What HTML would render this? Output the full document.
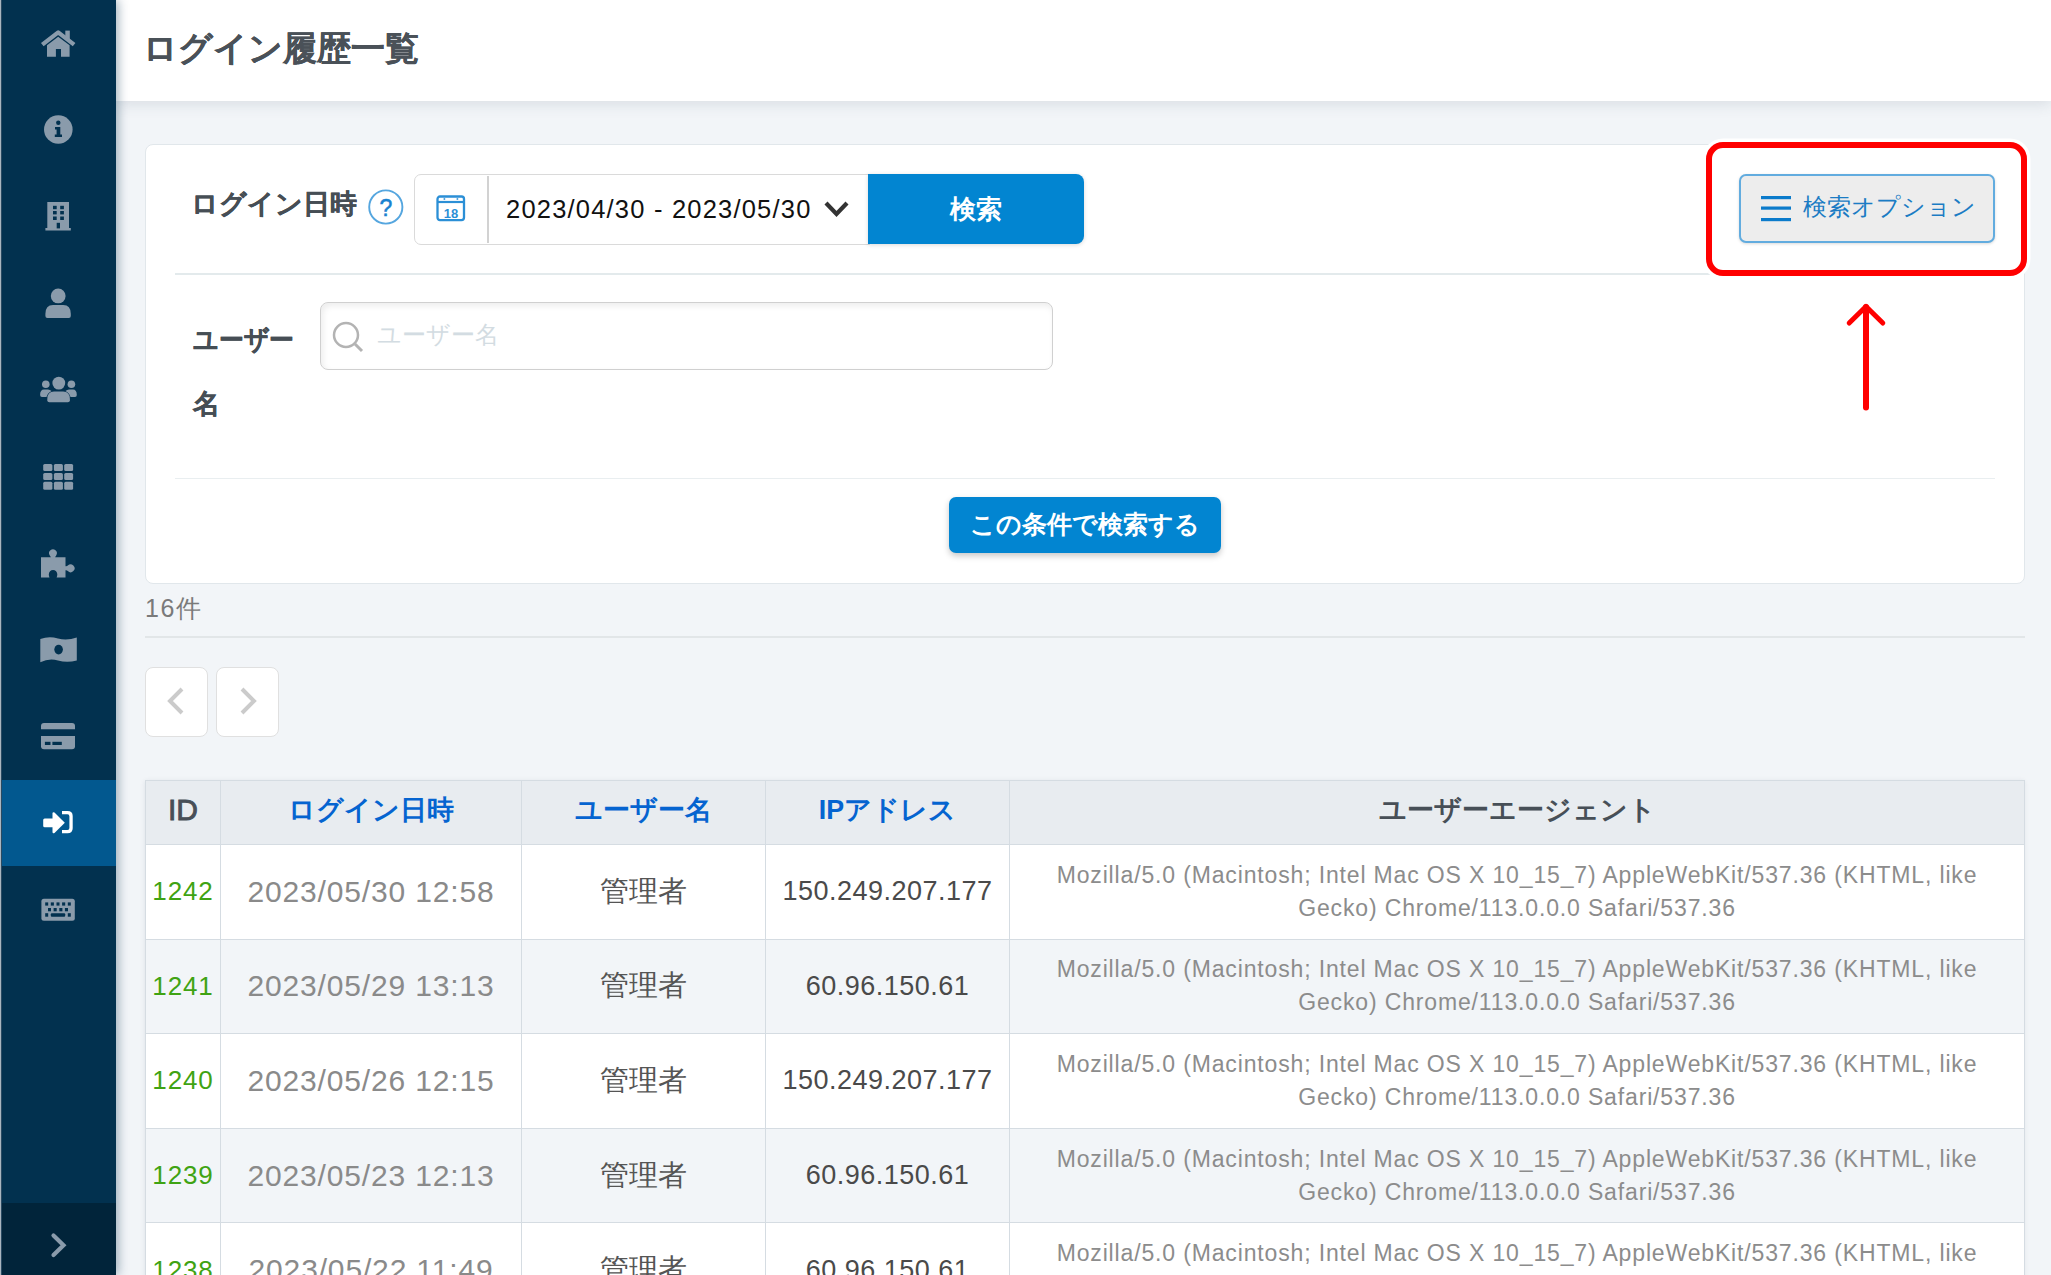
<!DOCTYPE html>
<html><head><meta charset="utf-8">
<style>
*{box-sizing:border-box;margin:0;padding:0}
html,body{width:2051px;height:1275px;overflow:hidden}
body{background:#F2F5F8;font-family:"Liberation Sans",sans-serif;position:relative;color:#333}
.abs{position:absolute}
#side{left:0;top:0;width:116px;height:1275px;background:#02314F;z-index:5;box-shadow:2px 0 10px rgba(0,45,80,.38)}
#side .edge{position:absolute;left:0;top:0;width:1px;height:1275px;background:#A9B5BF;z-index:2}#side .edge2{position:absolute;left:1px;top:0;width:1px;height:1275px;background:#2A4A62;z-index:2}#side .act{position:absolute;left:0;top:780px;width:116px;height:86px;background:#02588F}
#side .bot{position:absolute;left:0;top:1203px;width:116px;height:72px;background:#01243A}
#side svg{position:absolute;fill:#8A9BAB}
#hdr{left:116px;top:0;width:1935px;height:101px;background:#fff;z-index:3;box-shadow:0 3px 14px rgba(60,80,100,.14)}
#title{left:143px;top:24px;font-size:33.5px;font-weight:bold;color:#4A5158;letter-spacing:0px;-webkit-text-stroke:0.3px #4A5158;z-index:4;white-space:nowrap;line-height:50px}
#card{left:145px;top:144px;width:1880px;height:440px;background:#fff;border:1.5px solid #E1E7EB;border-radius:8px}
.lbl{font-weight:bold;color:#464E55;white-space:nowrap;font-size:27.3px;line-height:40px;-webkit-text-stroke:0.3px #464E55}
.hr{height:1.5px;background:#E3EAEC}
#datebox{left:414px;top:174px;width:456px;height:71px;border:1.6px solid #DADADA;border-radius:7px 0 0 7px;background:#fff}
#datesep{left:487px;top:176px;width:1.5px;height:67px;background:#D2D2D2}
#datetxt{left:506px;top:191px;font-size:25.5px;color:#111;white-space:nowrap;line-height:36px;letter-spacing:1.2px}
#btn1{left:868px;top:174px;width:216px;height:70px;background:#0285D1;border-radius:0 8px 8px 0;color:#fff;font-weight:bold;font-size:26px;text-align:center;line-height:70px;box-shadow:0 1px 4px rgba(0,0,0,.15)}
#red{left:1706px;top:142px;width:321px;height:134px;border:6.5px solid #FF0000;border-radius:17px;box-shadow:0 0 0 3.5px #fff;z-index:2}
#optbtn{left:1739px;top:174px;width:256px;height:69px;background:#EDEDED;border:2px solid #62ACDF;border-radius:7px;box-shadow:0 1px 3px rgba(0,0,0,.15);z-index:3}
#opttxt{left:1803px;top:188px;font-size:23.5px;color:#1B7CC4;white-space:nowrap;line-height:38px;z-index:4}
#uinput{left:320px;top:302px;width:733px;height:68px;border:1.6px solid #D0D0D0;border-radius:8px;background:#fff;box-shadow:inset 2px 3px 6px rgba(0,0,0,.075)}
#uph{left:377px;top:316px;font-size:24.2px;color:#D3DCE2;white-space:nowrap;line-height:38px}
#btn2{left:949px;top:497px;width:272px;height:56px;background:#0285D1;border-radius:7px;color:#fff;font-weight:bold;font-size:24.6px;text-align:center;line-height:56px;box-shadow:0 3px 6px rgba(0,0,0,.22)}
#cnt{left:145px;top:590px;font-size:25px;color:#7A7A7A;line-height:36px;white-space:nowrap}
#cnthr{left:145px;top:636px;width:1880px;height:2px;background:#E2E6E8}
.pg{width:62px;height:70px;background:#fff;border:1.5px solid #E0E0E0;border-radius:8px}
#tbl{left:145px;top:780px;width:1879px;height:520px;box-shadow:0 1px 5px rgba(40,60,80,.10)}
table{border-collapse:collapse;width:1879px;table-layout:fixed}
th,td{border:1.5px solid #D5DCE2;text-align:center;vertical-align:middle;white-space:nowrap}
th{background:#E8ECF0;height:64px;font-size:26.8px;font-weight:bold;color:#0564D0;padding-bottom:5px}
th.id{color:#474F57}
td{height:94.6px;background:#fff}
tr.odd td{background:#F2F5F8}
td.id{color:#3FA313;font-size:26px;letter-spacing:0.9px}
td.dt{color:#8A8A8A;font-size:30px;letter-spacing:0.85px}
td.un{color:#555;font-size:29px}
td.ip{color:#4A4A4A;font-size:27px;letter-spacing:0.5px}
td.ua{color:#8C8C8C;font-size:23px;white-space:normal;line-height:33px;letter-spacing:0.85px;padding:0 20px}
</style></head><body>
<div id="side" class="abs">
  <div class="edge"></div><div class="edge2"></div><div class="act"></div>
  <div class="bot"></div>
<svg style="position:absolute;left:0;top:0" width="116" height="1275" viewBox="0 0 116 1275">
<g fill="#8A9BAB">
<!-- home -->
<polyline points="42.3,44.6 58.2,32.4 74.1,44.6" fill="none" stroke="#8A9BAB" stroke-width="4.3" stroke-linecap="butt" stroke-linejoin="round"/>
<rect x="65.3" y="30.6" width="4.5" height="9"/>
<path d="M47,45.3 L58.2,36.8 L69.6,45.3 L69.6,56.7 L61,56.7 L61,49 L55.9,49 L55.9,56.7 L47,56.7 Z"/>
<!-- info -->
<circle cx="58.3" cy="129.5" r="14.3"/>
<!-- building -->
<rect x="47.3" y="202" width="21.7" height="27"/>
<rect x="45.4" y="228" width="25.4" height="2.5"/>
<!-- user -->
<circle cx="58.2" cy="295.9" r="7.4"/>
<path d="M45.4,314 Q45.4,305 53,305 L63.2,305 Q70.8,305 70.8,314 L70.8,316 Q70.8,318 68.8,318 L47.4,318 Q45.4,318 45.4,316 Z"/>
<!-- users -->
<circle cx="58.8" cy="383.1" r="6.4"/>
<circle cx="45.8" cy="384.2" r="3.8"/>
<circle cx="71.4" cy="384.2" r="3.8"/>
<path d="M47.3,399 Q47.3,391.4 54,391.4 L63.2,391.4 Q69.9,391.4 69.9,399 L69.9,400.3 Q69.9,402.3 67.9,402.3 L49.3,402.3 Q47.3,402.3 47.3,400.3 Z"/>
<path d="M40.1,395 Q40.1,389.5 44,389.5 L48,389.5 Q50,389.5 51.5,391 Q47.5,393 46.5,397 L42,397 Q40.1,397 40.1,395 Z"/>
<path d="M76.8,395 Q76.8,389.5 73,389.5 L69,389.5 Q67,389.5 65.5,391 Q69.5,393 70.5,397 L75,397 Q76.8,397 76.8,395 Z"/>
<!-- th -->
<rect x="43.2" y="463.9" width="9.2" height="7.1" rx="1.5"/><rect x="53.9" y="463.9" width="9" height="7.1" rx="1.5"/><rect x="64.2" y="463.9" width="8.9" height="7.1" rx="1.5"/>
<rect x="43.2" y="472.9" width="9.2" height="7" rx="1.5"/><rect x="53.9" y="472.9" width="9" height="7" rx="1.5"/><rect x="64.2" y="472.9" width="8.9" height="7" rx="1.5"/>
<rect x="43.2" y="481.8" width="9.2" height="7.9" rx="1.5"/><rect x="53.9" y="481.8" width="9" height="7.9" rx="1.5"/><rect x="64.2" y="481.8" width="8.9" height="7.9" rx="1.5"/>
<!-- puzzle -->
<path d="M41,557.3 L50.8,557.3 Q50.5,556 49.6,555.2 A3.9,3.9 0 1 1 56.3,555.2 Q55.5,556 55.2,557.3 L65.5,557.3 L65.5,566.2 Q66.8,566.5 67.8,565.6 A3.9,3.9 0 1 1 67.8,571 Q66.8,570 65.5,570.3 L65.5,577.6 L56.6,577.6 Q57.3,576 57.3,574.2 A4.2,4.2 0 1 0 48.8,574.2 Q48.8,576 49.5,577.6 L41,577.6 Z"/>
<!-- money wave -->
<path d="M40.3,639 Q49,636 58,638.5 Q67,641 76.8,637.5 L76.8,660.5 Q67,663 58,660.5 Q49,658 40.3,662.3 Z"/>
<!-- credit card -->
<path d="M41,729.2 L41,726 Q41,723 44,723 L72,723 Q75,723 75,726 L75,729.2 Z"/>
<path d="M41,736.1 L75,736.1 L75,746.3 Q75,749.3 72,749.3 L44,749.3 Q41,749.3 41,746.3 Z"/>
<!-- keyboard -->
<rect x="41.4" y="898.8" width="33.4" height="21.9" rx="2.5"/>
</g>
<g fill="#02314F">
<!-- info i -->
<circle cx="58.3" cy="122.8" r="2.2"/>
<path d="M55,127 L60.3,127 L60.3,134.5 L62,134.5 L62,137 L54.8,137 L54.8,134.5 L56.6,134.5 L56.6,129.5 L55,129.5 Z"/>
<!-- building windows -->
<rect x="53" y="205.8" width="3.7" height="3.4"/><rect x="60.2" y="205.8" width="3.7" height="3.4"/>
<rect x="53" y="211" width="3.7" height="3.4"/><rect x="60.2" y="211" width="3.7" height="3.4"/>
<rect x="53" y="216.5" width="3.7" height="3.5"/><rect x="60.2" y="216.5" width="3.7" height="3.5"/>
<rect x="56.7" y="222.8" width="3.3" height="5.6"/>
<!-- money hole -->
<ellipse cx="58.6" cy="649.6" rx="4.3" ry="4.8"/>
<!-- card slots -->
<rect x="44.9" y="741.8" width="5.6" height="3.2"/><rect x="52.4" y="741.8" width="9.4" height="3.2"/>
<!-- keyboard keys -->
<rect x="45.2" y="902.4" width="3" height="3.2"/><rect x="50.8" y="902.4" width="3.1" height="3.2"/><rect x="56.5" y="902.4" width="3" height="3.2"/><rect x="62.1" y="902.4" width="3.1" height="3.2"/><rect x="67.8" y="902.4" width="3" height="3.2"/>
<rect x="48" y="908" width="3" height="3.3"/><rect x="53.6" y="908" width="3.1" height="3.3"/><rect x="59.3" y="908" width="3.1" height="3.3"/><rect x="64.9" y="908" width="3.1" height="3.3"/>
<rect x="45.2" y="913.2" width="3" height="3.5"/><rect x="50.8" y="913.2" width="14.4" height="3.5" rx="1"/><rect x="67.8" y="913.2" width="3" height="3.5"/>
</g>
<!-- sign-in white -->
<g fill="#fff">
<rect x="43.2" y="818.5" width="11" height="8.7" rx="1.5"/>
<path d="M52.5,813.5 Q52.5,811.5 54.5,812.5 L64.8,822.8 L54.5,833 Q52.5,834 52.5,832 Z"/>
<path d="M62,811 L67.5,811 Q72.7,811 72.7,816 L72.7,828.3 Q72.7,833.3 67.5,833.3 L62,833.3 L62,830 L67.5,830 Q69.4,830 69.4,828 L69.4,816.3 Q69.4,814.3 67.5,814.3 L62,814.3 Z"/>
</g>
<polyline points="53.5,1235.5 63.5,1245.3 53.5,1255" fill="none" stroke="#8A9BAB" stroke-width="4.2" stroke-linecap="round"/>
</svg>
</div>
<div id="hdr" class="abs"></div>
<div id="title" class="abs">ログイン履歴一覧</div>
<div id="card" class="abs"></div>
<div class="abs lbl" style="left:191px;top:184px">ログイン日時</div>
<svg class="abs" style="left:367px;top:188px" width="38" height="38" viewBox="0 0 38 38"><circle cx="18.8" cy="19" r="16.6" fill="none" stroke="#55A6DF" stroke-width="1.9"/><text x="19" y="28" text-anchor="middle" font-family="Liberation Sans" font-size="23" fill="#1A82D0" stroke="#1A82D0" stroke-width="0.5">?</text></svg>
<div id="datebox" class="abs"></div>
<div id="datesep" class="abs"></div>
<svg class="abs" style="left:435px;top:194px" width="32" height="29" viewBox="0 0 32 29"><rect x="2.5" y="2.5" width="26.5" height="23.6" rx="2.5" fill="none" stroke="#2B8FD6" stroke-width="2.3"/><line x1="2.5" y1="8" x2="29.5" y2="8" stroke="#2B8FD6" stroke-width="2.2"/><rect x="8.6" y="4.2" width="1.6" height="1.6" fill="#2B8FD6"/><rect x="21.6" y="4.2" width="1.6" height="1.6" fill="#2B8FD6"/><text x="16" y="23.5" text-anchor="middle" font-family="Liberation Sans" font-size="13" font-weight="bold" fill="#2B8FD6">18</text></svg>
<div id="datetxt" class="abs">2023/04/30 - 2023/05/30</div>
<svg class="abs" style="left:823px;top:200px" width="27" height="18" viewBox="0 0 27 18"><polyline points="3,3 13.5,14 24,3" fill="none" stroke="#333" stroke-width="4.2"/></svg>
<div id="btn1" class="abs">検索</div>
<div id="red" class="abs"></div>
<div id="optbtn" class="abs"></div>
<svg class="abs" style="left:1761px;top:195px;z-index:4" width="30" height="27" viewBox="0 0 30 27"><rect x="0" y="1" width="30" height="3.2" fill="#0B7BCB"/><rect x="0" y="11.5" width="30" height="3.2" fill="#0B7BCB"/><rect x="0" y="23" width="30" height="3.2" fill="#0B7BCB"/></svg>
<div id="opttxt" class="abs">検索オプション</div>
<div class="abs hr" style="left:175px;top:273px;width:1820px"></div>
<div class="abs lbl" style="left:193px;top:320px;transform:scaleX(0.92);transform-origin:0 0">ユーザー</div>
<div class="abs lbl" style="left:193px;top:384px">名</div>
<div id="uinput" class="abs"></div>
<svg class="abs" style="left:331px;top:319.5px" width="36" height="36" viewBox="0 0 36 36"><circle cx="15" cy="15" r="12" fill="none" stroke="#B3B3B3" stroke-width="2.5"/><line x1="24" y1="24" x2="31" y2="31" stroke="#B3B3B3" stroke-width="3"/></svg>
<div id="uph" class="abs">ユーザー名</div>
<svg class="abs" style="left:1840px;top:300px" width="52" height="115" viewBox="0 0 52 115"><line x1="26" y1="7" x2="26" y2="107.5" stroke="#FF0000" stroke-width="6" stroke-linecap="round"/><polyline points="9.2,23 26,6.5 42.8,23" fill="none" stroke="#FF0000" stroke-width="5" stroke-linecap="round" stroke-linejoin="round"/></svg>
<div class="abs hr" style="left:175px;top:477.5px;width:1820px;background:#E9EEF0"></div>
<div id="btn2" class="abs">この条件で検索する</div>
<div id="cnt" class="abs"><span style="letter-spacing:1.5px">16</span>件</div>
<div id="cnthr" class="abs"></div>
<div class="abs pg" style="left:145px;top:667px;width:63px"></div>
<div class="abs pg" style="left:216px;top:667px;width:63px"></div>
<svg class="abs" style="left:165px;top:686px" width="22" height="30" viewBox="0 0 22 30"><polyline points="17,3 5,15 17,27" fill="none" stroke="#CBCBCB" stroke-width="4"/></svg>
<svg class="abs" style="left:237px;top:686px" width="22" height="30" viewBox="0 0 22 30"><polyline points="5,3 17,15 5,27" fill="none" stroke="#CBCBCB" stroke-width="4"/></svg>
<div id="tbl" class="abs">
<table>
<colgroup><col style="width:75px"><col style="width:301px"><col style="width:244px"><col style="width:244px"><col style="width:1015px"></colgroup>
<tr><th class="id" style="font-size:30px;font-weight:normal;-webkit-text-stroke:0.9px #474F57">ID</th><th>ログイン日時</th><th>ユーザー名</th><th>IPアドレス</th><th class="id">ユーザーエージェント</th></tr>
<tr><td class="id">1242</td><td class="dt">2023/05/30 12:58</td><td class="un">管理者</td><td class="ip">150.249.207.177</td><td class="ua">Mozilla/5.0 (Macintosh; Intel Mac OS X 10_15_7) AppleWebKit/537.36 (KHTML, like Gecko) Chrome/113.0.0.0 Safari/537.36</td></tr>
<tr class="odd"><td class="id">1241</td><td class="dt">2023/05/29 13:13</td><td class="un">管理者</td><td class="ip">60.96.150.61</td><td class="ua">Mozilla/5.0 (Macintosh; Intel Mac OS X 10_15_7) AppleWebKit/537.36 (KHTML, like Gecko) Chrome/113.0.0.0 Safari/537.36</td></tr>
<tr><td class="id">1240</td><td class="dt">2023/05/26 12:15</td><td class="un">管理者</td><td class="ip">150.249.207.177</td><td class="ua">Mozilla/5.0 (Macintosh; Intel Mac OS X 10_15_7) AppleWebKit/537.36 (KHTML, like Gecko) Chrome/113.0.0.0 Safari/537.36</td></tr>
<tr class="odd"><td class="id">1239</td><td class="dt">2023/05/23 12:13</td><td class="un">管理者</td><td class="ip">60.96.150.61</td><td class="ua">Mozilla/5.0 (Macintosh; Intel Mac OS X 10_15_7) AppleWebKit/537.36 (KHTML, like Gecko) Chrome/113.0.0.0 Safari/537.36</td></tr>
<tr><td class="id">1238</td><td class="dt">2023/05/22 11:49</td><td class="un">管理者</td><td class="ip">60.96.150.61</td><td class="ua">Mozilla/5.0 (Macintosh; Intel Mac OS X 10_15_7) AppleWebKit/537.36 (KHTML, like Gecko) Chrome/113.0.0.0 Safari/537.36</td></tr>
</table>
</div>
</body></html>
